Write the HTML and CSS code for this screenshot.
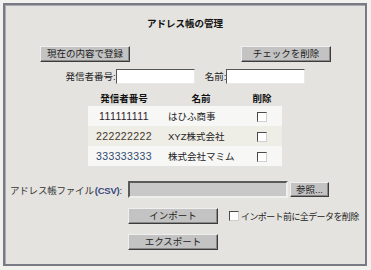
FILE: index.html
```
<!DOCTYPE html>
<html lang="ja">
<head>
    <meta charset="UTF-8">
    <title>アドレス帳の管理</title>
    <link rel="stylesheet" href="styles.css">
</head>
<body>
    <div class="panel">
        <h1 class="title">アドレス帳の管理</h1>

        <div class="topButtons">
            <button class="btn wide">現在の内容で登録</button>
            <button class="btn wide">チェックを削除</button>
        </div>

        <div class="searchRow">
            <label>発信者番号:</label><input type="text" class="textBox">
            <label class="nameLabel">名前:</label><input type="text" class="textBox">
        </div>

        <table class="book">
            <tr>
                <th class="colNum">発信者番号</th>
                <th class="colName">名前</th>
                <th class="colDel">削除</th>
            </tr>
            <tr class="odd">
                <td class="num n1">111111111</td>
                <td class="name">はひふ商事</td>
                <td class="del"><input type="checkbox" class="check"></td>
            </tr>
            <tr class="even">
                <td class="num n2">222222222</td>
                <td class="name">XYZ株式会社</td>
                <td class="del"><input type="checkbox" class="check"></td>
            </tr>
            <tr class="odd">
                <td class="num n3">333333333</td>
                <td class="name">株式会社マミム</td>
                <td class="del"><input type="checkbox" class="check"></td>
            </tr>
        </table>

        <div class="fileArea">
            <div class="fileLabel">アドレス帳ファイル<b class="csv">(CSV)</b>:</div>
            <div class="fileRow">
                <span class="fileBox"></span>
                <button class="btn browse">参照...</button>
            </div>

            <div></div>
            <div class="importRow">
                <button class="btn wide">インポート</button>
                <label class="clearOpt"><input type="checkbox" class="check">インポート前に全データを削除</label>
            </div>

            <div></div>
            <div class="exportRow">
                <button class="btn wide">エクスポート</button>
            </div>
        </div>
    </div>
</body>
</html>
```

FILE: styles.css
```
body {
    margin: 0;
    padding: 3px 4px 4px 3px;
    background-color: #f1f1ed;
    font-family: "Liberation Sans", "Noto Sans CJK JP", sans-serif;
    font-size: 9.5px;
    color: #222;
    white-space: nowrap;
}

.panel {
    height: 259px;
    border: 2px solid #7a7a84;
    box-shadow: inset 1px 1px 0 #a9a9b1;
    background-color: #e4e3df;
}

.title {
    margin: 13px 0 0;
    font-size: 9.5px;
    font-weight: bold;
    text-align: center;
    line-height: 12px;
    color: #111;
}

/* buttons look like old windows buttons */
.btn {
    font-family: inherit;
    font-size: 9.5px;
    color: #222;
    height: 16px;
    padding: 0;
    background-color: #c3c3c3;
    border: 1px solid;
    border-color: #efefef #3c3c3c #3c3c3c #efefef;
    box-shadow: inset -1px -1px 0 #8a8a8a;
    line-height: 12px;
}

.wide {
    width: 90px;
}

.topButtons {
    display: flex;
    justify-content: space-between;
    padding: 0 34px 0 35px;
    margin-top: 16px;
}

.searchRow {
    display: flex;
    justify-content: center;
    align-items: center;
    margin-top: 7px;
    padding-left: 1px;
}

.searchRow label {
    line-height: 15px;
}

.nameLabel {
    margin-left: 10px;
}

.textBox {
    width: 79px;
    height: 15px;
    box-sizing: border-box;
    margin: 0;
    padding: 0;
    background: #fff;
    border: 1px solid;
    border-color: #555 #e8e8e8 #e8e8e8 #555;
}

.book {
    margin: 6px auto 0;
    border-collapse: collapse;
    width: 194px;
    table-layout: fixed;
}

.book th {
    font-size: 9.5px;
    font-weight: bold;
    height: 16px;
    padding: 0;
    color: #111;
}

.colNum {
    width: 72px;
}

.colName {
    width: 82px;
}

.book td {
    height: 20px;
    padding: 0;
}

.odd {
    background-color: #f7f7f5;
}

.even {
    background-color: #eeede6;
}

.num {
    text-align: center;
    font-size: 10.5px;
    letter-spacing: 0.4px;
}

.n1 { color: #2a1a2c; }
.n2 { color: #3f3a2c; }
.n3 { color: #2f4b70; }

.book td.name {
    padding-left: 8px;
}

.del {
    text-align: center;
}

.check {
    appearance: none;
    width: 10px;
    height: 10px;
    margin: 0;
    vertical-align: middle;
    background: #fff;
    border: 1px solid;
    border-color: #4a4a4a #cfcfcf #cfcfcf #4a4a4a;
}

.fileArea {
    display: grid;
    grid-template-columns: 123px auto;
    row-gap: 10px;
    margin-top: 15px;
}

.fileLabel {
    padding-left: 5px;
    align-self: center;
    color: #333;
    letter-spacing: -0.2px;
}

.csv {
    color: #3b4a7e;
    margin-left: 1px;
}

.fileRow {
    display: flex;
    align-items: center;
    gap: 2px;
}

.fileBox {
    width: 160px;
    height: 17px;
    box-sizing: border-box;
    background-color: #c8c8c8;
    border: 2px solid;
    border-color: #5a5a5a #efefef #efefef #5a5a5a;
}

.browse {
    width: 39px;
    height: 15px;
}

.importRow {
    display: flex;
    align-items: center;
    gap: 11px;
}

.clearOpt {
    display: flex;
    align-items: center;
    gap: 2px;
    font-size: 9px;
    letter-spacing: -0.6px;
}

.exportRow {
    display: flex;
}
```
